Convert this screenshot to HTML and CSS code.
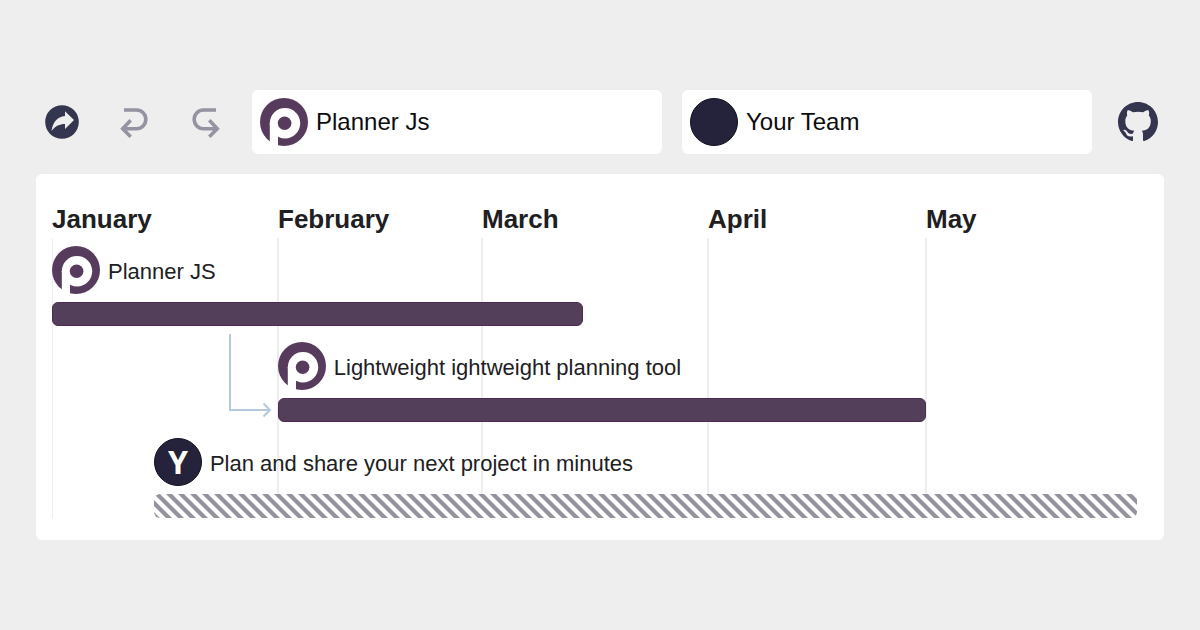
FILE: index.html
```html
<!DOCTYPE html>
<html lang="en">
<head>
<meta charset="utf-8">
<meta name="viewport" content="width=device-width, initial-scale=1">
<title>Planner Js</title>
<link rel="stylesheet" href="styles.css">
</head>
<body>
<svg class="sprite" aria-hidden="true">
  <symbol id="planner-logo" viewBox="0 0 48 48">
    <circle cx="24" cy="24" r="24" fill="#573b5c"/>
    <circle cx="25" cy="25.3" r="15.2" fill="#fff"/>
    <path d="M9.8 25H18V48H9.8z" fill="#fff"/>
    <circle cx="24.6" cy="25.3" r="6.8" fill="#573b5c"/>
  </symbol>
</svg>
<main class="app">
  <header class="toolbar">
    <button class="tool" type="button" aria-label="Share">
      <svg width="34" height="34" viewBox="0 0 34 34"><circle cx="17" cy="17" r="16.8" fill="#34354f"/><path d="M29 15 20 6.300V11C12 11.800 8 17 6.500 26C10.500 20.900 14.500 19.200 20 19.100V24z" fill="#eee"/></svg>
    </button>
    <button class="tool" type="button" aria-label="Undo">
      <svg class="line-icon" width="28" height="32" viewBox="0 -1 28 32"><path d="M4 3H16.500a9.3 9.3 0 0 1 0 18.7H3M10.7 13.3 2.7 21.7 10.7 29.7"/></svg>
    </button>
    <button class="tool" type="button" aria-label="Redo">
      <svg class="line-icon" width="28" height="32" viewBox="0 -1 28 32"><path d="M24 3H11.500a9.3 9.3 0 0 0 0 18.7H25M17.3 13.3 25.3 21.7 17.3 29.7"/></svg>
    </button>
    <label class="field">
      <svg class="avatar" aria-hidden="true"><use href="#planner-logo"/></svg>
      <input class="field-input" type="text" value="Planner Js" aria-label="Project name">
    </label>
    <label class="field">
      <span class="avatar avatar-team"></span>
      <input class="field-input" type="text" value="Your Team" aria-label="Team name">
    </label>
    <a class="tool" href="#" aria-label="GitHub">
      <svg width="40" height="40" viewBox="0 0 16 16"><path fill="#34354f" d="M8 0C3.58 0 0 3.58 0 8c0 3.54 2.29 6.53 5.47 7.59.4.07.55-.17.55-.38 0-.19-.01-.82-.01-1.49-2.01.37-2.53-.49-2.69-.94-.09-.23-.48-.94-.82-1.13-.28-.15-.68-.52-.01-.53.63-.01 1.08.58 1.23.82.72 1.21 1.87.87 2.33.66.07-.52.28-.87.51-1.07-1.78-.2-3.64-.89-3.64-3.95 0-.87.31-1.59.82-2.15-.08-.2-.36-1.02.08-2.12 0 0 .67-.21 2.2.82.64-.18 1.32-.27 2-.27s1.36.09 2 .27c1.53-1.04 2.2-.82 2.2-.82.44 1.1.16 1.92.08 2.12.51.56.82 1.27.82 2.15 0 3.07-1.87 3.75-3.65 3.95.29.25.54.73.54 1.48 0 1.07-.01 1.93-.01 2.2 0 .21.15.46.55.38A8.01 8.01 0 0 0 16 8c0-4.42-3.58-8-8-8z"/></svg>
    </a>
  </header>

  <section class="planner" aria-label="Timeline">
    <div class="months">
      <h2 class="month">January</h2>
      <h2 class="month">February</h2>
      <h2 class="month">March</h2>
      <h2 class="month">April</h2>
      <h2 class="month">May</h2>
    </div>
    <div class="chart">
      <div class="gridlines"><span></span><span></span><span></span><span></span><span></span></div>
      <article class="task" style="margin-left: 0%; width: 48.45%">
        <div class="task-head">
          <svg class="avatar" aria-hidden="true"><use href="#planner-logo"/></svg>
          <h3 class="task-name">Planner JS</h3>
        </div>
        <div class="bar"></div>
      </article>
      <article class="task" style="margin-left: 20.6%; width: 59.1%">
        <svg class="link-arrow" width="44" height="84" viewBox="0 0 44 84" aria-hidden="true"><path d="M2 0V76H42M35.500 69.500 42 76 35.500 82.500"/></svg>
        <div class="task-head">
          <svg class="avatar" aria-hidden="true"><use href="#planner-logo"/></svg>
          <h3 class="task-name">Lightweight ightweight planning tool</h3>
        </div>
        <div class="bar"></div>
      </article>
      <article class="task" style="margin-left: 9.3%; width: 89.7%">
        <div class="task-head">
          <span class="avatar avatar-team">Y</span>
          <h3 class="task-name">Plan and share your next project in minutes</h3>
        </div>
        <div class="bar bar-striped"></div>
      </article>
    </div>
  </section>
</main>
</body>
</html>
```
FILE: styles.css
```css
* {
  box-sizing: border-box;
}

body {
  margin: 0;
  min-height: 100vh;
  display: grid;
  align-items: center;
  background: #eee;
  color: #202022;
  font-family: "Liberation Sans", Arial, sans-serif;
}

.sprite {
  position: absolute;
  width: 0;
  height: 0;
}

.app {
  display: grid;
  gap: 20px;
  padding: 36px;
}

.toolbar {
  display: flex;
  align-items: center;
  gap: 20px;
}

.tool {
  display: grid;
  place-items: center;
  flex: none;
  width: 52px;
  height: 64px;
  padding: 0;
  border: 0;
  background: none;
  cursor: pointer;
}

.line-icon {
  fill: none;
  stroke: #9393a1;
  stroke-width: 3.5;
}

.field {
  display: flex;
  flex: 1;
  align-items: center;
  gap: 8px;
  min-width: 0;
  padding: 8px;
  border-radius: 6px;
  background: #fff;
}

.field-input {
  flex: 1;
  min-width: 0;
  padding: 0;
  border: 0;
  outline: 0;
  background: none;
  color: #0c0c0e;
  font: 24px/32px "Liberation Sans", Arial, sans-serif;
}

.avatar {
  flex: none;
  width: 48px;
  height: 48px;
}

.avatar-team {
  display: grid;
  place-items: center;
  border: 1px solid #101020;
  border-radius: 50%;
  background: #24233b;
  color: #fff;
  font: bold 32px/46px "Open Sans", sans-serif;
}

.planner {
  padding: 28px 16px 22px;
  border-radius: 6px;
  background: #fff;
}

.months,
.gridlines {
  display: grid;
  grid-template-columns: 226fr 204fr 226fr 218fr 222fr;
}

.month {
  margin: 0;
  padding-bottom: 2px;
  font-size: 26px;
  line-height: 34px;
}

.chart {
  position: relative;
  display: grid;
  gap: 16px;
  padding-top: 8px;
}

.gridlines {
  position: absolute;
  inset: 0;
}

.gridlines span {
  margin-left: -1px;
  border-left: 2px solid #eee;
}

.gridlines span:first-child {
  margin-left: 0;
  border-left-width: 1px;
}

.task {
  position: relative;
  display: grid;
  gap: 8px;
}

.task-head {
  display: flex;
  align-items: center;
  gap: 8px;
}

.task-name {
  margin: 0;
  padding-top: 4px;
  font-size: 22px;
  font-weight: 400;
  line-height: 32px;
  white-space: nowrap;
}

.bar {
  height: 24px;
  border: 1px solid #4c2c50;
  border-radius: 6px;
  background: #543f5a;
}

.bar-striped {
  border: 0;
  background: linear-gradient(45deg, #9393a0 22%, #fff 28%, #fff 47%, #9393a0 53%, #9393a0 72%, #fff 78%) 0 0 / 12px 12px;
}

.link-arrow {
  position: absolute;
  top: -8px;
  left: -50px;
  fill: none;
  stroke: #b5c8de;
  stroke-width: 2;
}
```
